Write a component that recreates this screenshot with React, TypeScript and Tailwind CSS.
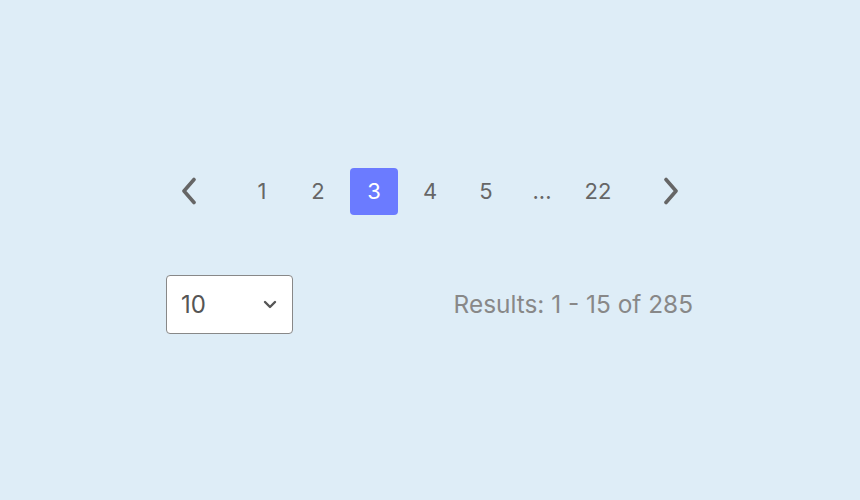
import React, { useState } from 'react';

const pages = ['1', '2', '3', '4', '5', '...', '22'];

export default function App() {
  const [current, setCurrent] = useState('3');

  return (
    <div className="w-[860px] h-[500px] bg-[#deedf7] flex flex-col items-center pt-[167px] font-['Inter',sans-serif]">
      {/* Pagination */}
      <div className="flex items-center gap-6">
        <button className="w-12 h-12 flex items-center justify-center text-[#666666]">
          <svg width="22" height="28" viewBox="0 0 22 28" fill="none">
            <path d="M15 2.5 L5 14 L15 25.5" stroke="currentColor" strokeWidth="3.6" strokeLinecap="round" strokeLinejoin="round" />
          </svg>
        </button>
        <div className="flex items-center gap-2">
          {pages.map((p) => (
            <button
              key={p}
              onClick={() => p !== '...' && setCurrent(p)}
              className={`w-12 h-[47px] rounded-[4px] flex items-center justify-center text-[22px] ${
                p === current ? 'bg-[#6b7bff] text-white' : 'text-[#666666]'
              }`}
            >
              {p}
            </button>
          ))}
        </div>
        <button className="w-12 h-12 flex items-center justify-center text-[#666666]">
          <svg width="22" height="28" viewBox="0 0 22 28" fill="none">
            <path d="M7 2.5 L17 14 L7 25.5" stroke="currentColor" strokeWidth="3.6" strokeLinecap="round" strokeLinejoin="round" />
          </svg>
        </button>
      </div>

      {/* Footer */}
      <div className="w-[528px] flex items-center justify-between mt-[60px]">
        <div className="w-[127px] h-[59px] bg-white border border-[#888888] rounded-[4px] flex items-center justify-between pl-[14px] pr-[14px]">
          <span className="text-[24px] text-[#555555]">10</span>
          <svg width="16" height="10" viewBox="0 0 16 10" fill="none">
            <path d="M3 2 L8 7 L13 2" stroke="#555555" strokeWidth="2.4" strokeLinecap="round" strokeLinejoin="round" />
          </svg>
        </div>
        <span className="text-[24.4px] text-[#888888] mr-[1px]">Results: 1 - 15 of 285</span>
      </div>
    </div>
  );
}
